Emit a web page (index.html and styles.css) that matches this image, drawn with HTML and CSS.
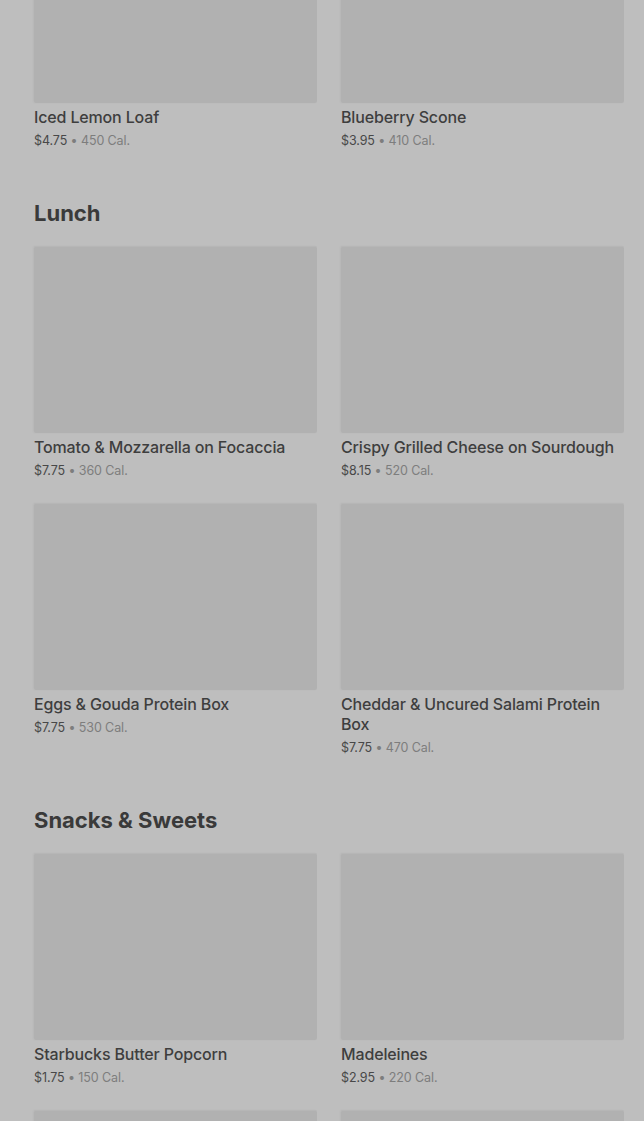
FILE: index.html
```html
<!DOCTYPE html>
<html lang="en">
<head>
<meta charset="utf-8">
<title>Menu</title>
<link rel="stylesheet" href="styles.css">
</head>
<body>
<main class="menu">
  <section class="section first">
    <div class="grid">
      <div class="card"><div class="thumb"></div><div class="name">Iced Lemon Loaf</div><div class="meta"><span class="price">$4.75</span> • 450 Cal.</div></div>
      <div class="card"><div class="thumb"></div><div class="name">Blueberry Scone</div><div class="meta"><span class="price">$3.95</span> • 410 Cal.</div></div>
    </div>
  </section>
  <section class="section">
    <h2 class="heading">Lunch</h2>
    <div class="grid">
      <div class="card"><div class="thumb"></div><div class="name">Tomato &amp; Mozzarella on Focaccia</div><div class="meta"><span class="price">$7.75</span> • 360 Cal.</div></div>
      <div class="card"><div class="thumb"></div><div class="name">Crispy Grilled Cheese on Sourdough</div><div class="meta"><span class="price">$8.15</span> • 520 Cal.</div></div>
      <div class="card"><div class="thumb"></div><div class="name">Eggs &amp; Gouda Protein Box</div><div class="meta"><span class="price">$7.75</span> • 530 Cal.</div></div>
      <div class="card"><div class="thumb"></div><div class="name">Cheddar &amp; Uncured Salami Protein Box</div><div class="meta"><span class="price">$7.75</span> • 470 Cal.</div></div>
    </div>
  </section>
  <section class="section">
    <h2 class="heading">Snacks &amp; Sweets</h2>
    <div class="grid">
      <div class="card"><div class="thumb"></div><div class="name">Starbucks Butter Popcorn</div><div class="meta"><span class="price">$1.75</span> • 150 Cal.</div></div>
      <div class="card"><div class="thumb"></div><div class="name">Madeleines</div><div class="meta"><span class="price">$2.95</span> • 220 Cal.</div></div>
      <div class="card"><div class="thumb"></div><div class="name">&nbsp;</div><div class="meta">&nbsp;</div></div>
      <div class="card"><div class="thumb"></div><div class="name">&nbsp;</div><div class="meta">&nbsp;</div></div>
    </div>
  </section>
</main>
</body>
</html>
```
FILE: styles.css
```css
html, body {
  margin: 0;
  padding: 0;
  background: #bebebe;
  overflow: hidden;
}
body {
  font-family: Inter, "Noto Sans", "Liberation Sans", sans-serif;
  color: #3b3b3b;
}
.menu {
  margin-top: -84px;
  padding: 0 20px 0 34px;
  display: flex;
  flex-direction: column;
  gap: 46px;
}
.heading {
  margin: 0 0 17px;
  font-size: 22px;
  line-height: 32px;
  font-weight: 700;
  letter-spacing: 0;
  color: #3a3a3a;
}
.grid {
  display: grid;
  grid-template-columns: 283px 283px;
  column-gap: 24px;
  row-gap: 22px;
}
.card {
  display: flex;
  flex-direction: column;
}
.thumb {
  box-sizing: border-box;
  height: 187px;
  background: #b1b1b1;
  border-radius: 2px;
  box-shadow: -1px 0 2px rgba(0,0,0,0.04);
  border-top: 1px solid #b6b6b6;
}
.name {
  margin-top: 4px;
  font-size: 16px;
  line-height: 20px;
  font-weight: 500;
  color: #3e3e3e;
  letter-spacing: -0.15px;
}
.meta {
  margin-top: 4px;
  font-size: 12.5px;
  line-height: 20px;
  color: #7d7d7d;
  letter-spacing: -0.1px;
}
.price {
  color: #484848;
}
```
